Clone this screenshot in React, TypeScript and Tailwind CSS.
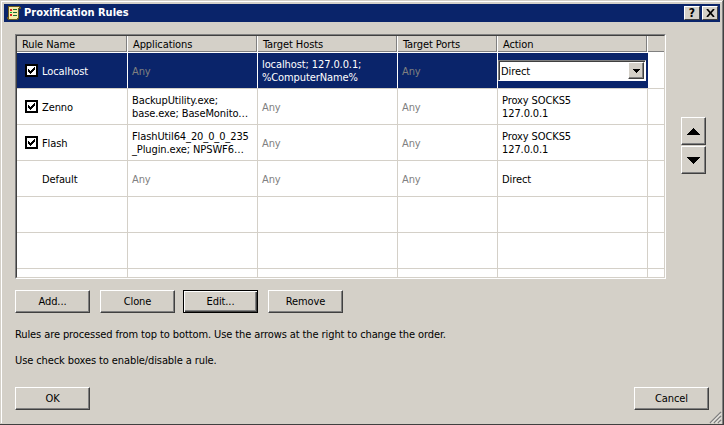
const FONT = "font-['DejaVu_Sans_Condensed','Liberation_Sans',sans-serif]";

const COLS = ['w-[111px]', 'w-[130px]', 'w-[140px]', 'w-[100px]', 'w-[150px]'];

type Cell = { text: string[]; muted?: boolean };
type Rule = { name: string; checked?: boolean; cells: Cell[] };

const ANY: Cell = { text: ['Any'], muted: true };

const RULES: Rule[] = [
  {
    name: 'Zenno',
    checked: true,
    cells: [
      { text: ['BackupUtility.exe;', 'base.exe; BaseMonito…'] },
      ANY,
      ANY,
      { text: ['Proxy SOCKS5', '127.0.0.1'] },
    ],
  },
  {
    name: 'Flash',
    checked: true,
    cells: [
      { text: ['FlashUtil64_20_0_0_235', '_Plugin.exe; NPSWF6…'] },
      ANY,
      ANY,
      { text: ['Proxy SOCKS5', '127.0.0.1'] },
    ],
  },
  { name: 'Default', cells: [ANY, ANY, ANY, { text: ['Direct'] }] },
];

function Btn({ label, isDefault, className = '' }: { label: string; isDefault?: boolean; className?: string }) {
  const edge = isDefault
    ? 'border-black shadow-[inset_1px_1px_0_#fff,inset_-1px_-1px_0_#404040,inset_-2px_-2px_0_#808080]'
    : 'border-b-[#404040] border-l-white border-r-[#404040] border-t-white shadow-[inset_-1px_-1px_0_#808080]';
  return (
    <button className={`flex h-[23px] w-[75px] items-center justify-center border bg-[#d4d0c8] pt-[2px] ${edge} ${className}`}>
      {label}
    </button>
  );
}

function Arrow({ down }: { down?: boolean }) {
  return (
    <button className="flex h-[28px] w-[25px] items-center justify-center border border-b-[#404040] border-l-white border-r-[#404040] border-t-white bg-[#d4d0c8] shadow-[inset_-1px_-1px_0_#808080]">
      <svg width="13" height="7" viewBox="0 0 13 7" shapeRendering="crispEdges">
        <path d={down ? 'M0 0H13L6.5 7Z' : 'M6.5 0L13 7H0Z'} fill="#000" />
      </svg>
    </button>
  );
}

function Check() {
  return (
    <span className="flex h-[13px] w-[13px] shrink-0 items-center justify-center border-2 border-black bg-white">
      <svg width="9" height="9" viewBox="0 0 9 9" shapeRendering="crispEdges">
        <path d="M1 3h1v3H1zM2 4h1v3H2zM3 5h1v3H3zM4 4h1v3H4zM5 3h1v3H5zM6 2h1v3H6zM7 1h1v3H7z" fill="#000" />
      </svg>
    </span>
  );
}

function NameCell({ name, checked }: { name: string; checked?: boolean }) {
  return (
    <div className={`flex items-center border-r border-[#d4d0c8] pl-[8px] ${COLS[0]}`}>
      <span className="w-[17px] shrink-0">{checked && <Check />}</span>
      <span className="pt-[3px]">{name}</span>
    </div>
  );
}

function DataCell({ cell, width, selected }: { cell: Cell; width: string; selected?: boolean }) {
  const color = cell.muted ? 'text-[#808080]' : selected ? 'text-white' : 'text-black';
  const line = selected ? 'border-white' : 'border-[#d4d0c8]';
  return (
    <div className={`flex flex-col justify-center border-r pl-[4px] pt-[1px] leading-[13px] ${line} ${width} ${color}`}>
      {cell.text.map((text) => (
        <span key={text} className="whitespace-nowrap">
          {text}
        </span>
      ))}
    </div>
  );
}

function Row({ rule }: { rule: Rule }) {
  return (
    <div className="flex h-[36px] border-b border-[#d4d0c8]">
      <NameCell name={rule.name} checked={rule.checked} />
      {rule.cells.map((cell, i) => (
        <DataCell key={i} cell={cell} width={COLS[i + 1]} />
      ))}
    </div>
  );
}

function EmptyRow({ className = 'h-[36px]' }: { className?: string }) {
  return (
    <div className={`flex ${className}`}>
      {COLS.map((w) => (
        <div key={w} className={`border-r border-[#d4d0c8] ${w}`} />
      ))}
    </div>
  );
}

function TitleIcon() {
  return (
    <svg width="16" height="16" viewBox="0 0 16 16" shapeRendering="crispEdges" className="shrink-0">
      <path d="M2 1h12v1h1v2h-2v10h-1v1H2v-1H1v-2h1V3H2Z" fill="#6b5a20" />
      <path d="M3 2h10v1h1v0h-2v10h-1v1H3v-1H2v0h1Z" fill="#f6eaa8" />
      <path d="M4 4h2v2H4zM4 9h2v2H4z" fill="#d82020" />
      <path d="M4 7h2v1H4z" fill="#18a030" />
      <path d="M7 4h4v1H7zM7 7h4v1H7zM7 10h4v1H7z" fill="#1c6a30" />
    </svg>
  );
}

function Grip() {
  return (
    <svg width="14" height="14" viewBox="0 0 14 14" className="absolute bottom-0 right-0">
      <path d="M13 2L2 13M13 6L6 13M13 10L10 13" stroke="#808080" strokeWidth="1.4" />
      <path d="M13 3.5L3.5 13M13 7.5L7.5 13M13 11.5L11.5 13" stroke="#fff" strokeWidth="0.8" />
    </svg>
  );
}

export default function App() {
  return (
    <div className={`h-[425px] w-[724px] overflow-hidden border-b border-r border-b-[#404040] border-r-[#404040] bg-[#d4d0c8] text-[11px] tracking-[-0.1px] text-black ${FONT}`}>
      <div className="relative h-[424px] w-[723px] border-b border-r border-b-[#808080] border-r-[#808080]">
        <div className="ml-[1px] mt-[1px] flex h-[422px] w-[721px] flex-col border-l border-t border-l-white border-t-white pl-[2px] pr-[1px] pt-[2px]">
          <div className="flex h-[18px] w-[716px] shrink-0 items-center bg-[#0a246a] pl-[2px] pr-[2px] tracking-normal text-white">
            <TitleIcon />
            <span className="ml-[2px] pt-[1px] font-bold">Proxification Rules</span>
            <span className="ml-auto flex h-[14px] w-[16px] items-center justify-center border border-b-[#404040] border-l-white border-r-[#404040] border-t-white bg-[#d4d0c8] text-[12px] font-bold text-black">
              ?
            </span>
            <span className="ml-[2px] flex h-[14px] w-[16px] items-center justify-center border border-b-[#404040] border-l-white border-r-[#404040] border-t-white bg-[#d4d0c8]">
              <svg width="9" height="8" viewBox="0 0 9 8">
                <path d="M1 0L8 8M8 0L1 8" stroke="#000" strokeWidth="1.7" />
              </svg>
            </span>
          </div>

          <div className="flex pl-[11px] pt-[12px]">
            <div className="h-[245px] w-[651px] border-b border-l border-r border-t border-b-white border-l-[#808080] border-r-white border-t-[#808080]">
              <div className="h-[243px] w-[649px] overflow-hidden border border-b-[#d4d0c8] border-l-[#404040] border-r-[#d4d0c8] border-t-[#404040] bg-white">
                <div className="flex h-[17px] border-b border-white bg-[#d4d0c8]">
                  {['Rule Name', 'Applications', 'Target Hosts', 'Target Ports', 'Action'].map((h, i) => (
                    <div key={h} className={`flex items-center border-r border-white pl-[5px] pt-[2px] shadow-[inset_-1px_-1px_0_#808080] ${COLS[i]}`}>
                      {h}
                    </div>
                  ))}
                  <div className="flex-1 shadow-[inset_0_-1px_0_#808080]" />
                </div>

                <div className="flex h-[36px] border-b border-[#d4d0c8]">
                  <div className={`flex items-center border-r border-white bg-[#0a246a] pl-[8px] text-white ${COLS[0]}`}>
                    <span className="w-[17px] shrink-0">
                      <Check />
                    </span>
                    <span className="pt-[3px]">Localhost</span>
                  </div>
                  <div className="flex w-[520px] bg-[#0a246a]">
                    <DataCell cell={ANY} width={COLS[1]} selected />
                    <DataCell cell={{ text: ['localhost; 127.0.0.1;', '%ComputerName%'] }} width={COLS[2]} selected />
                    <DataCell cell={ANY} width={COLS[3]} selected />
                    <div className={`flex items-center ${COLS[4]}`}>
                      <div className="flex h-[21px] w-[148px] items-center border border-b-white border-l-[#808080] border-r-white border-t-[#808080] bg-white shadow-[inset_1px_1px_0_#404040]">
                        <span className="pl-[2px] pt-[3px] text-black">Direct</span>
                        <span className="ml-auto mr-[1px] flex h-[17px] w-[16px] items-center justify-center border border-b-[#404040] border-l-white border-r-[#404040] border-t-white bg-[#d4d0c8] shadow-[inset_-1px_-1px_0_#808080]">
                          <svg width="7" height="4" viewBox="0 0 7 4" shapeRendering="crispEdges">
                            <path d="M0 0h7L3.5 4Z" fill="#000" />
                          </svg>
                        </span>
                      </div>
                    </div>
                  </div>
                </div>

                {RULES.map((rule) => (
                  <Row key={rule.name} rule={rule} />
                ))}
                <div className="border-b border-[#d4d0c8]">
                  <EmptyRow className="h-[35px]" />
                </div>
                <div className="border-b border-[#d4d0c8]">
                  <EmptyRow className="h-[35px]" />
                </div>
                <EmptyRow className="h-[8px]" />
              </div>
            </div>

            <div className="ml-[15px] mt-[83px] flex flex-col gap-[1px]">
              <Arrow />
              <Arrow down />
            </div>
          </div>

          <div className="flex pl-[11px] pt-[11px]">
            <Btn label="Add..." />
            <Btn label="Clone" className="ml-[10px]" />
            <Btn label="Edit..." isDefault className="ml-[8px]" />
            <Btn label="Remove" className="ml-[10px]" />
          </div>

          <p className="pl-[11px] pt-[14px] leading-[15px]">
            Rules are processed from top to bottom. Use the arrows at the right to change the order.
          </p>
          <p className="pl-[11px] pt-[11px] leading-[15px]">Use check boxes to enable/disable a rule.</p>

          <div className="flex pl-[11px] pr-[12px] pt-[19px]">
            <Btn label="OK" />
            <Btn label="Cancel" className="ml-auto" />
          </div>
        </div>
        <Grip />
      </div>
    </div>
  );
}
